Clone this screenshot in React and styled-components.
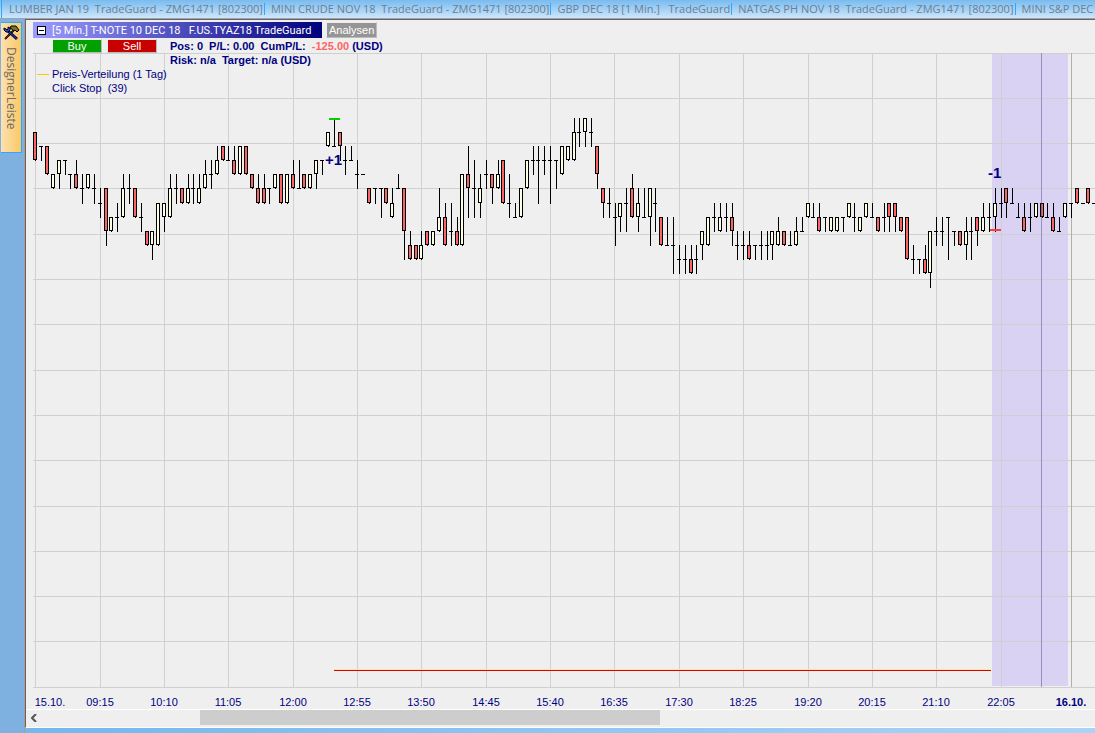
import React from 'react';
import styled, { createGlobalStyle } from 'styled-components';

const GlobalStyle = createGlobalStyle`
  * {
    box-sizing: border-box;
  }

  body {
    margin: 0;
    font-family: 'Liberation Sans', Arial, sans-serif;
    font-size: 11px;
    color: #000080;
  }
`;

const Page = styled.div`
  display: flex;
  flex-direction: column;
  height: 100vh;
  min-height: 400px;
  overflow: hidden;
  background: linear-gradient(to right, #74b6ec, #a8d4f8);
`;

const TabBar = styled.nav`
  display: flex;
  flex: none;
  height: 19px;
  overflow: hidden;
  border-bottom: 1px solid #9aa4ae;
  padding-left: 1px;
  background: linear-gradient(#78bbf0, #cfe6fb);
`;

const Tab = styled.a`
  flex: none;
  height: 12px;
  margin-top: 3px;
  border-left: 1px solid #2fa8f5;
  padding: 0 1px 0 6px;
  color: #6c7f93;
  font-family: 'Open Sans', sans-serif;
  font-size: 11px;
  line-height: 12px;
  text-decoration: none;
  white-space: pre;

  &:first-child {
    height: 18px;
    margin-top: 0;
    padding-left: 7px;
    line-height: 18px;
  }
`;

const Main = styled.div`
  display: flex;
  flex: 1;
  min-height: 0;
`;

const Sidebar = styled.aside`
  flex: none;
  width: 25px;
  border-right: 1px solid #a59c98;
  padding: 3px 2px 0 1px;
  background: #7eb1df;
`;

const DesignerButton = styled.button`
  display: flex;
  flex-direction: column;
  align-items: center;
  gap: 6px;
  width: 21px;
  height: 131px;
  border: 1px solid #2fa8f5;
  border-left: 0;
  padding: 2px 0 0;
  background: linear-gradient(to right, #fde1b0, #fbc865);
  color: #6c6862;
  font-family: 'Open Sans', sans-serif;
  font-size: 12px;
  line-height: 16px;
`;

const VerticalLabel = styled.span`
  writing-mode: vertical-rl;
`;

const Window = styled.section`
  display: flex;
  flex: 1;
  flex-direction: column;
  min-width: 0;
  margin-bottom: 5px;
  border-top: 1px solid #6b6363;
  border-left: 1px solid #6b6363;
  border-bottom: 1px solid #fff;
  background: #efefef;
`;

const ChartArea = styled.div`
  position: relative;
  flex: 1;
  min-height: 0;
  overflow: hidden;
`;

const Drawing = styled.svg`
  display: block;
  width: 100%;
  height: 100%;
  font-size: 11px;
`;

const Overlay = styled.div`
  position: absolute;
  top: 2px;
  left: 7px;
`;

const TitleRow = styled.header`
  display: flex;
  gap: 4px;
`;

const Title = styled.h1`
  display: flex;
  align-items: center;
  gap: 6px;
  width: 289px;
  height: 16px;
  margin: 0;
  padding-left: 4px;
  background: linear-gradient(to right, #9c9cff, #00007c);
  color: #fff;
  font-family: Roboto, 'Liberation Sans', sans-serif;
  font-size: 11px;
  font-weight: normal;
  white-space: pre;
`;

const CollapseButton = styled.button`
  display: flex;
  width: 9px;
  height: 9px;
  border: 1px solid #000;
  padding: 0;
  background: #fff;

  &::before {
    content: '';
    width: 5px;
    height: 1px;
    margin: 3px 1px;
    background: #000;
  }
`;

const AnalysisButton = styled.button`
  height: 16px;
  border: 1px solid #bbb;
  border-top-color: #eee;
  border-left-color: #eee;
  padding: 0 2px;
  background: #959595;
  color: #fff;
  font: 11px 'Liberation Sans', Arial, sans-serif;
`;

const TradeRow = styled.div`
  display: flex;
  align-items: flex-start;
  gap: 5px;
  margin-top: 1px;
  padding-left: 19px;
`;

const TradeButton = styled.button`
  width: 50px;
  height: 14px;
  border: 1px solid #bbb;
  border-top-color: #eee;
  border-left-color: #eee;
  padding: 0;
  background: ${props => props.color};
  color: #fff;
  font: 11px/12px 'Liberation Sans', Arial, sans-serif;
`;

const Position = styled.div`
  padding-left: 8px;
  font-weight: bold;
  line-height: 14px;
`;

const PositionLine = styled.div`
  display: flex;
  white-space: pre;
`;

const Loss = styled.span`
  color: #ff6464;
`;

const Legend = styled.ul`
  margin: 0;
  padding: 0 0 0 4px;
  line-height: 14px;
  list-style: none;
`;

const LegendItem = styled.li`
  display: flex;
  align-items: center;
  gap: 3px;
  white-space: pre;

  &::before {
    content: '';
    width: 12px;
    height: 1px;
    background: ${props => props.color};
  }
`;

const ScrollBar = styled.div`
  display: flex;
  flex: none;
  height: 18px;
  border-top: 1px solid #fff;
  padding-bottom: 2px;
`;

const ScrollButton = styled.button`
  display: flex;
  align-items: center;
  width: 16px;
  border: 0;
  padding: 0 0 0 5px;
  background: none;
`;

const ScrollTrack = styled.div`
  display: grid;
  flex: 1;
  grid-template-columns: 158fr 460fr 435fr;
`;

const ScrollThumb = styled.div`
  grid-column: 2;
  background: #cdcdcd;
`;

const TABS = [
  'LUMBER JAN 19  TradeGuard - ZMG1471 [802300]',
  'MINI CRUDE NOV 18  TradeGuard - ZMG1471 [802300]',
  'GBP DEC 18 [1 Min.]   TradeGuard',
  'NATGAS PH NOV 18  TradeGuard - ZMG1471 [802300]',
  'MINI S&P DEC'
];

const TIMES = [
  '09:15',
  '10:10',
  '11:05',
  '12:00',
  '12:55',
  '13:50',
  '14:45',
  '15:40',
  '16:35',
  '17:30',
  '18:25',
  '19:20',
  '20:15',
  '21:10',
  '22:05'
];

// Kind (r = down, w = up, d = unchanged), then the price steps below the day
// high, in hex: high, body top, body bottom, low.
const CANDLES = `
  r1133 d2223 r2244 w4455 w3345 d3334 d4445 r3455 d4556 w4455 d4556 d5667
  r5589 w7788 d6778 w4577 d4556 r5577 d6778 r8899 w889A w6699 w6678 w4577
  d4556 r5566 w4566 d4556 w4566 w3455 d3445 w2344 r2233 d2333 r2344 w2244
  r2244 r4455 r4566 r4566 d5556 w4455 r4466 w4466 r3455 d3555 r4455 w4455
  w3345 d3334 w1122 d0222 r1123 d2334 d2333 d3445 d4444 r5566 d5556 d5557
  r5566 w5677 d4555 r558A r89AA r99AA w89AA r8899 w8899 w5788 r6799 d6889
  r7899 w4499 r2457 d3557 w4567 d3445 r4456 w3455 r3366 d4667 d6777 w5577
  w3355 d2334 d2336 d2334 d2336 d3335 w2244 w2233 w0133 d0112 w0012 d0112
  r2245 r5567 d5667 d6779 w6678 d5668 r4577 w5678 d5777 w5579 d5668 r7799
  d7999 d799B d9AAB d9AAB r9ABB d9AAB w889A w7799 d6778 w6788 d6778 r6789
  d899A d899A r89AA d999A d899A d899A w889A w7899 r8899 d8999 w7899 d7888
  w6677 d6777 r6788 d7778 w7788 w7788 d7778 w6677 d6778 w7788 w6677 d6777
  r7788 d6778 r6678 r6678 r7788 r77AA d9AAB dAAAB r9ABB w88BC d7889 d7889
  d777A d8889 r8899 w789A d788A r7789 w6788 d6778 w5678 d5667 r5567 d5666
  d6777 r6788 d6778 w6677 r6677 d6777 r6788 d7888 w6677 d6667 r5566 d6666
  r5566 d6666
`
  .trim()
  .split(/\s+/);

const STEP = 5.85;
const PLOT_TOP = 33;
const PLOT_BOTTOM = 667;
const PRICE_Y = [98, 112, 126, 140, 154, 168, 183, 197, 211, 225, 239, 253, 267];

const gridX = index => Math.floor(74.18 + index * STEP * 11);
const gridY = index => Math.floor(PLOT_TOP + index * 45.3);

function Candle({ code, index }) {
  const x = 7 + Math.floor(index * STEP + 0.9);
  const [high, top, bottom, low] = code
    .slice(1)
    .split('')
    .map(level => PRICE_Y[parseInt(level, 16)]);

  return (
    <g>
      {high !== low && (
        <rect x={x + 2} y={high} width="1" height={low - high + 1} />
      )}
      {top === bottom ? (
        <rect x={x} y={top} width="4" height="1" />
      ) : (
        <React.Fragment>
          <rect x={x} y={top} width="4" height={bottom - top} />
          <rect
            x={x + 1}
            y={top + 1}
            width="2"
            height={bottom - top - 2}
            fill={code[0] === 'r' ? '#f96464' : '#ffffe1'}
          />
        </React.Fragment>
      )}
    </g>
  );
}

function Chart() {
  const rows = Array.from({ length: 15 }, (_, i) => gridY(i));

  return (
    <Drawing role="img" aria-label="T-NOTE 10 DEC 18" shapeRendering="crispEdges">
      <rect x="966" y="34" width="76" height="632" fill="#d9d2f3" />
      <g fill="#d0d0d0">
        {rows.map(y => (
          <rect key={y} x="7" y={y} width="100%" height="1" />
        ))}
        <rect x="9" y={PLOT_TOP} width="1" height="634" />
        {TIMES.map((time, i) => (
          <rect key={time} x={gridX(i)} y={PLOT_TOP} width="1" height="634" />
        ))}
      </g>
      <rect x="1045" y={PLOT_TOP} width="1" height="634" fill="#b0b0b0" />
      <rect x="308" y="649" width="657" height="1" fill="#f5e6a0" />
      <rect x="308" y="650" width="657" height="1" fill="#e00000" />
      {CANDLES.map((code, i) => (
        <Candle key={i} code={code} index={i} />
      ))}
      <rect x="1015" y={PLOT_TOP} width="1" height="634" fill="#50508c" opacity="0.5" />
      <rect x="303" y="98" width="11" height="2" fill="#00d000" />
      <rect x="964" y="209" width="11" height="2" fill="#ff3c3c" />
      <g fill="#000080" fontSize="15" fontWeight="bold">
        <text x="299" y="145">+1</text>
        <text x="962" y="158">-1</text>
      </g>
      <g fill="#000080" textAnchor="middle">
        <text x="24" y={PLOT_BOTTOM + 19}>15.10.</text>
        {TIMES.map((time, i) => (
          <text key={time} x={gridX(i)} y={PLOT_BOTTOM + 19}>
            {time}
          </text>
        ))}
        <text x="1045" y={PLOT_BOTTOM + 19} fontWeight="bold">
          16.10.
        </text>
      </g>
    </Drawing>
  );
}

function ToolsIcon() {
  return (
    <svg width="17" height="16" viewBox="0 0 17 16" fill="none" aria-hidden="true">
      <path d="M2 14 11 5" stroke="#000" strokeWidth="2" />
      <path d="M2 14 11 5" stroke="#802010" />
      <path d="M8 1h5l3 4-2 2-2-2-2 1-1-2-2-1z" fill="#77752c" stroke="#000" />
      <path d="m5 6 9 8" stroke="#000040" strokeWidth="3" />
      <path d="m5 6 9 8" stroke="#2850d0" />
      <path d="M1 3v2l2 2h2l2-2V3L5 2v2L4 5 3 4z" fill="#2850d0" stroke="#000" />
    </svg>
  );
}

export default function App() {
  return (
    <Page>
      <GlobalStyle />
      <TabBar>
        {TABS.map(tab => (
          <Tab key={tab} href="#">
            {tab}
          </Tab>
        ))}
      </TabBar>
      <Main>
        <Sidebar>
          <DesignerButton>
            <ToolsIcon />
            <VerticalLabel>DesignerLeiste</VerticalLabel>
          </DesignerButton>
        </Sidebar>
        <Window>
          <ChartArea>
            <Chart />
            <Overlay>
              <TitleRow>
                <Title>
                  <CollapseButton aria-label="Collapse" />
                  {'[5 Min.] T-NOTE 10 DEC 18   F.US.TYAZ18 TradeGuard'}
                </Title>
                <AnalysisButton>Analysen</AnalysisButton>
              </TitleRow>
              <TradeRow>
                <TradeButton color="#00a000">Buy</TradeButton>
                <TradeButton color="#c80000">Sell</TradeButton>
                <Position>
                  <PositionLine>
                    <span>{'Pos: 0  P/L: 0.00  CumP/L:  '}</span>
                    <Loss>-125.00</Loss>
                    <span> (USD)</span>
                  </PositionLine>
                  <PositionLine>{'Risk: n/a  Target: n/a (USD)'}</PositionLine>
                </Position>
              </TradeRow>
              <Legend>
                <LegendItem color="#ffc800">Preis-Verteilung (1 Tag)</LegendItem>
                <LegendItem color="transparent">{'Click Stop  (39)'}</LegendItem>
              </Legend>
            </Overlay>
          </ChartArea>
          <ScrollBar>
            <ScrollButton aria-label="Scroll left">
              <svg width="6" height="8" fill="none" aria-hidden="true">
                <path d="M5 0 1 4l4 4" stroke="#555" strokeWidth="2" />
              </svg>
            </ScrollButton>
            <ScrollTrack>
              <ScrollThumb />
            </ScrollTrack>
          </ScrollBar>
        </Window>
      </Main>
    </Page>
  );
}
